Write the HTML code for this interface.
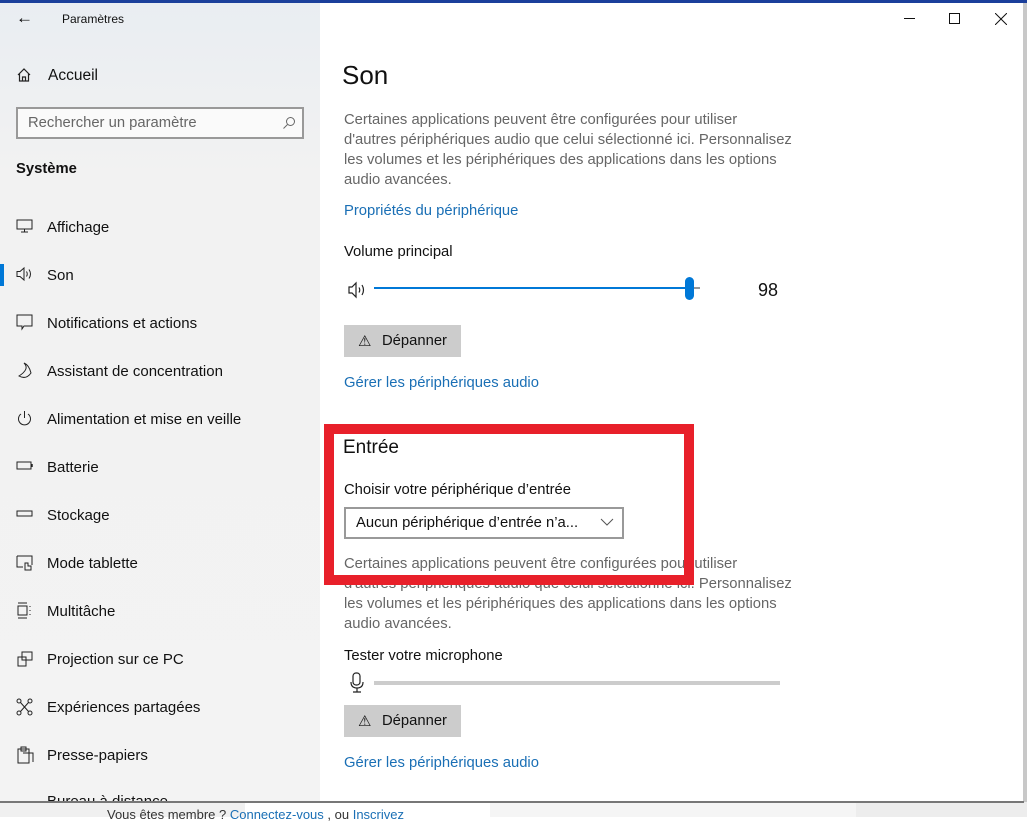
<!DOCTYPE html>
<html><head><meta charset="utf-8"><style>
*{margin:0;padding:0;box-sizing:border-box}
body{width:1027px;height:817px;overflow:hidden;position:relative;background:#fff;font-family:"Liberation Sans",sans-serif;color:#000}
.a{position:absolute;white-space:nowrap}
#below{position:absolute;left:0;top:802px;width:1027px;height:15px;background:#fff}
#side{position:absolute;left:0;top:0;width:320px;height:802px;background:linear-gradient(180deg,#e9edf2 0,#f2f2f2 180px,#f3f3f3 100%)}
#main{position:absolute;left:320px;top:0;width:703px;height:802px;background:#fff}
.nav{font-size:15px;color:#111;left:47px}
.ico{position:absolute;left:16px}
.t{font-size:14.8px;color:#666;line-height:20px;left:344px}
.lnk{font-size:14.8px;color:#1a6fb5;left:344px}
.btn{position:absolute;left:344px;width:117px;height:32px;background:#ccc;font-size:14.8px;color:#111}
</style></head><body>
<div id="below">
 <div style="position:absolute;left:0;top:0;width:245px;height:15px;background:#f0f0f0"></div>
 <div style="position:absolute;left:490px;top:0;width:366px;height:15px;background:#f5f5f5"></div>
 <div style="position:absolute;left:856px;top:0;width:171px;height:15px;background:#ededed"></div>
 <div class="a" style="left:107px;top:5px;font-size:13px;color:#333">Vous êtes membre ? <span style="color:#1a6fb5">Connectez-vous</span> , ou <span style="color:#1a6fb5">Inscrivez</span></div>
</div>
<div style="position:absolute;left:1023px;top:0;width:4px;height:802px;background:#c8c8c8"></div>
<div id="side"></div>
<div id="main"></div>
<div style="position:absolute;left:0;top:0;width:1027px;height:3px;background:#1b3f9b"></div>
<div style="position:absolute;left:0;top:801px;width:1024px;height:2px;background:#777"></div>

<div class="a" style="left:16px;top:8px;font-size:17px">&#8592;</div>
<div class="a" style="left:62px;top:12px;font-size:12px;color:#111">Paramètres</div>
<svg class="ico" style="top:67px" width="16" height="16" viewBox="0 0 16 16"><path d="M2 8 L8 2 L14 8 M3.5 6.5 V14 H12.5 V6.5 M6.5 14 V10 H9.5 V14" fill="none" stroke="#222" stroke-width="1.2"/></svg>
<div class="a nav" style="left:48px;top:67px;font-size:15.5px">Accueil</div>
<div style="position:absolute;left:16px;top:107px;width:288px;height:32px;border:2px solid #999;background:#fafafa"></div>
<div class="a" style="left:28px;top:115px;font-size:14.8px;color:#666">Rechercher un paramètre</div>
<svg style="position:absolute;left:282px;top:116px" width="14" height="14" viewBox="0 0 14 14"><circle cx="8.5" cy="5.5" r="4" fill="none" stroke="#666"/><path d="M5.5 8.5 L1.5 12.5" stroke="#666"/></svg>
<div class="a" style="left:16px;top:161px;font-size:14.8px;font-weight:bold;color:#111">Système</div>

<div style="position:absolute;left:0;top:264px;width:4px;height:22px;background:#0078d7"></div>
<svg class="ico" style="top:218px" width="18" height="16" viewBox="0 0 18 16"><rect x="1" y="2" width="15" height="9" fill="none" stroke="#222"/><path d="M8.5 11v3M5 14h7" stroke="#222"/></svg>
<div class="a nav" style="top:219px">Affichage</div>
<svg class="ico" style="top:266px" width="20" height="16" viewBox="0 0 20 16"><path d="M1 5.5h3l4-3.5v12l-4-3.5H1z" fill="none" stroke="#222"/><path d="M10.5 5.5q1.5 2.5 0 5M13 3.5q3 4.5 0 9" fill="none" stroke="#222"/></svg>
<div class="a nav" style="top:267px">Son</div>
<svg class="ico" style="top:314px" width="18" height="18" viewBox="0 0 18 18"><path d="M1 1h15v11H8l-2 3v-3H1z" fill="none" stroke="#222"/></svg>
<div class="a nav" style="top:315px">Notifications et actions</div>
<svg class="ico" style="top:362px" width="18" height="18" viewBox="0 0 18 18"><path d="M8 1q6 6 -5 13q7 4 12 -3q-2 -8 -7 -10z" fill="none" stroke="#222"/></svg>
<div class="a nav" style="top:363px">Assistant de concentration</div>
<svg class="ico" style="top:410px" width="18" height="18" viewBox="0 0 18 18"><path d="M5 4a6 6 0 1 0 7 0M8.5 1v7" fill="none" stroke="#222"/></svg>
<div class="a nav" style="top:411px">Alimentation et mise en veille</div>
<svg class="ico" style="top:459px" width="18" height="14" viewBox="0 0 18 14"><rect x="1" y="3" width="14" height="7" fill="none" stroke="#222"/><path d="M16 5v3" stroke="#222" stroke-width="1.5"/></svg>
<div class="a nav" style="top:459px">Batterie</div>
<svg class="ico" style="top:507px" width="18" height="14" viewBox="0 0 18 14"><rect x="1" y="4" width="15" height="5" fill="none" stroke="#222"/></svg>
<div class="a nav" style="top:507px">Stockage</div>
<svg class="ico" style="top:554px" width="18" height="18" viewBox="0 0 18 18"><path d="M1 2h15v9M1 2v11h6" fill="none" stroke="#222"/><path d="M9 16v-7h3v3h3v4z" fill="none" stroke="#222"/></svg>
<div class="a nav" style="top:555px">Mode tablette</div>
<svg class="ico" style="top:602px" width="18" height="18" viewBox="0 0 18 18"><path d="M2 1h9M2 16h9M2 4h9v9H2zM14 4v1M14 8v1M14 12v1" fill="none" stroke="#222"/></svg>
<div class="a nav" style="top:603px">Multitâche</div>
<svg class="ico" style="top:650px" width="18" height="18" viewBox="0 0 18 18"><path d="M6 2h10v8H6zM2 7h8v9H2zM4 16h4" fill="none" stroke="#222"/></svg>
<div class="a nav" style="top:651px">Projection sur ce PC</div>
<svg class="ico" style="top:698px" width="18" height="18" viewBox="0 0 18 18"><circle cx="3" cy="3" r="2" fill="none" stroke="#222"/><circle cx="14" cy="3" r="2" fill="none" stroke="#222"/><circle cx="3" cy="15" r="2" fill="none" stroke="#222"/><circle cx="14" cy="15" r="2" fill="none" stroke="#222"/><path d="M4.5 4.5l8 9M12.5 4.5l-8 9" stroke="#222"/></svg>
<div class="a nav" style="top:699px">Expériences partagées</div>
<svg class="ico" style="top:746px" width="18" height="18" viewBox="0 0 18 18"><path d="M2 3h11v14H2zM5 1h5v4H5z" fill="none" stroke="#222"/><path d="M7 7h10v9" fill="none" stroke="#222"/></svg>
<div class="a nav" style="top:747px">Presse-papiers</div>
<div class="a nav" style="top:793px;height:8px;overflow:hidden;line-height:18px">Bureau à distance</div>

<div class="a" style="left:904px;top:18px;width:11px;height:1px;background:#111"></div>
<div style="position:absolute;left:949px;top:13px;width:11px;height:11px;border:1px solid #111"></div>
<svg style="position:absolute;left:995px;top:13px" width="12" height="12"><path d="M0 0L12 12M12 0L0 12" stroke="#111"/></svg>

<div class="a" style="left:342px;top:60px;font-size:26px;color:#111">Son</div>
<div class="a t" style="top:110px">Certaines applications peuvent être configurées pour utiliser<br>d'autres périphériques audio que celui sélectionné ici. Personnalisez<br>les volumes et les périphériques des applications dans les options<br>audio avancées.</div>
<div class="a lnk" style="top:203px">Propriétés du périphérique</div>
<div class="a" style="left:344px;top:244px;font-size:14.8px;color:#111">Volume principal</div>
<svg style="position:absolute;left:348px;top:281px" width="22" height="18" viewBox="0 0 22 18"><path d="M1 6h3l4-4v14l-4-4H1z" fill="none" stroke="#222" stroke-width="1.2"/><path d="M11 6.5q1.5 2.5 0 5M14 4q3 5 0 10" fill="none" stroke="#222" stroke-width="1.2"/></svg>
<div style="position:absolute;left:374px;top:287px;width:312px;height:2px;background:#0078d7"></div>
<div style="position:absolute;left:690px;top:287px;width:10px;height:2px;background:#999"></div>
<div style="position:absolute;left:685px;top:277px;width:9px;height:23px;border-radius:5px;background:#0078d7"></div>
<div class="a" style="left:758px;top:280px;font-size:18px;color:#111">98</div>
<div class="btn" style="top:325px"><span class="a" style="left:14px;top:8px">⚠</span><span class="a" style="left:38px;top:8px">Dépanner</span></div>
<div class="a lnk" style="top:375px">Gérer les périphériques audio</div>

<div class="a" style="left:343px;top:437px;font-size:19px;color:#111">Entrée</div>
<div class="a" style="left:344px;top:482px;font-size:14.8px;color:#111">Choisir votre périphérique d’entrée</div>
<div style="position:absolute;left:344px;top:507px;width:280px;height:32px;border:2px solid #999;background:#fff"></div>
<div class="a" style="left:356px;top:515px;font-size:14.8px;color:#111">Aucun périphérique d’entrée n’a...</div>
<svg style="position:absolute;left:600px;top:518px" width="14" height="8"><path d="M1 1l6 6 6-6" fill="none" stroke="#555"/></svg>
<div class="a t" style="top:554px">Certaines applications peuvent être configurées pour utiliser<br>d'autres périphériques audio que celui sélectionné ici. Personnalisez<br>les volumes et les périphériques des applications dans les options<br>audio avancées.</div>
<div style="position:absolute;left:324px;top:424px;width:370px;height:161px;border:10px solid #e8202a"></div>
<div class="a" style="left:344px;top:648px;font-size:14.8px;color:#111">Tester votre microphone</div>
<svg style="position:absolute;left:350px;top:672px" width="14" height="22" viewBox="0 0 14 22"><rect x="3" y="1" width="7" height="12" rx="3" fill="none" stroke="#222" stroke-width="1.2"/><path d="M1 10q0 6 6 6q6 0 6-6M7 16v4M3 20h8" fill="none" stroke="#222" stroke-width="1.2"/></svg>
<div style="position:absolute;left:374px;top:681px;width:406px;height:4px;background:#ccc"></div>
<div class="btn" style="top:705px"><span class="a" style="left:14px;top:8px">⚠</span><span class="a" style="left:38px;top:8px">Dépanner</span></div>
<div class="a lnk" style="top:755px">Gérer les périphériques audio</div>
</body></html>
